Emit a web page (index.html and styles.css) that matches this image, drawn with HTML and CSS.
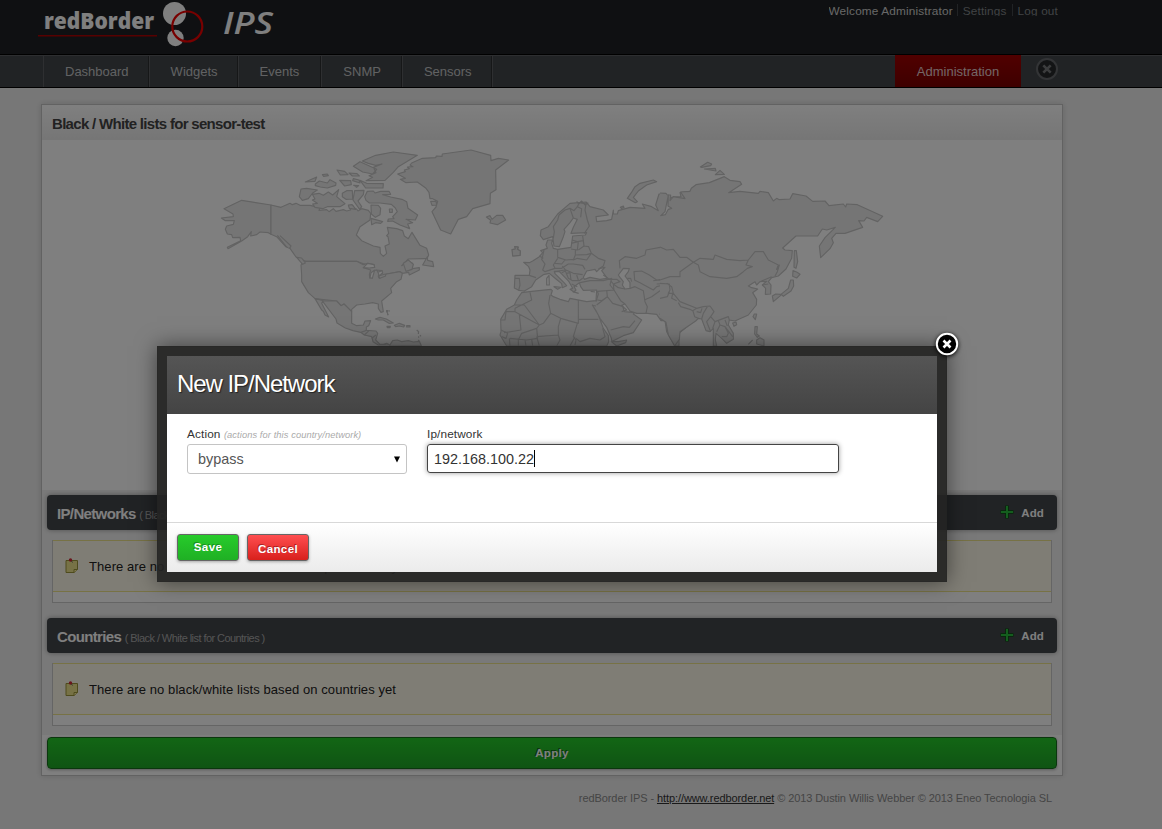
FILE: index.html
```html
<!DOCTYPE html>
<html lang="en">
<head>
<meta charset="utf-8">
<title>redBorder IPS</title>
<link rel="stylesheet" href="styles.css">
</head>
<body>
<div class="page">
  <header class="top">
    <svg class="logo" width="240" height="50" viewBox="36 0 240 50">
      <text class="logo-red" x="44" y="28.5" textLength="110" lengthAdjust="spacingAndGlyphs">redBorder</text>
      <path d="M38 35.7H157" stroke="#b00000" stroke-width="1.4"/>
      <circle cx="174.500" cy="13.500" r="11.500" fill="#fff"/>
      <circle cx="175.500" cy="38" r="8.200" fill="#fff"/>
      <circle cx="187.300" cy="26.500" r="15" fill="none" stroke="#f00000" stroke-width="2.200"/>
      <text class="logo-ips" x="223" y="34" textLength="50" lengthAdjust="spacingAndGlyphs">IPS</text>
    </svg>
    <nav class="user">
      <span class="user-name">Welcome Administrator</span>
      <a>Settings</a>
      <a>Log out</a>
    </nav>
  </header>
  <nav class="menu">
    <a class="tab">Dashboard</a><a class="tab">Widgets</a><a class="tab tab-events">Events</a><a class="tab tab-snmp">SNMP</a><a class="tab">Sensors</a>
    <a class="admin">Administration</a>
    <svg class="menu-close" width="24" height="24" viewBox="0 0 24 24"><circle cx="12" cy="12" r="10" fill="#26282b" stroke="#66696c" stroke-width="2"/><path d="M8.300 8.300l7.400 7.400M15.700 8.300l-7.400 7.400" stroke="#77797b" stroke-width="2.600"/></svg>
  </nav>
  <main class="panel">
    <h1 class="panel-title">Black / White lists for sensor-test</h1>
    <svg class="map" width="1020" height="350" viewBox="42 140 1020 350">
      <g transform="translate(200 140) scale(.33333)">
        <path d="M72 206L125 181L213 195V283L205 278L180 276L170 284L152 288L154 275L143 290L125 303L84 326L82 322L122 302L120 292L98 293L95 284L82 282L76 268L80 258L100 253L103 242L76 242L64 234L100 230L99 222Z"/>
        <path d="M213 195L243 202L270 190L277 194L288 190L300 196L330 196L360 203L357 211L380 209L387 215L400 206L408 214L430 209L440 213L452 210L447 197L458 196L463 205L470 207L474 213L485 206L505 211L512 220L510 240L480 260L469 285L485 302L520 318L540 322L541 340L550 349L560 340L555 318L568 312L564 290L560 287L566 280L562 262L590 266L608 272L613 288L625 296L636 277L660 316L680 325L686 345L681 356L672 356L625 357L605 377L622 366L638 370L637 386L658 383L658 390L628 405L626 397L607 400L600 395L560 402L538 415L533 410L510 415L508 398L490 383L503 376L470 364H317L288 351L270 325L257 320L230 290L213 283Z"/>
        <path d="M308 367L317 364H470L490 374L503 370L522 374L524 382L490 383L512 390L508 405L510 415L520 394L528 390L540 397L535 410L538 415L560 402L600 395L607 400L603 418L590 425L572 445L575 458L545 483L550 515L543 517L535 505V492L518 488L495 492L470 495L455 508L455 515L440 500L432 492L423 497L410 483L345 476L325 458L305 425L305 405L303 375Z"/>
        <path d="M345 476L370 482L410 483L423 497L432 492L440 500L455 515L455 550L470 557L490 555L495 543L512 542L506 557L499 561V571L528 573L533 580L527 600L540 613L550 613L560 610L570 615H535L519 605L515 590L493 585L482 577L459 572L436 564L411 549L408 537L368 484L365 490L386 531L375 525L370 514L365 510Z"/>
        <path d="M483 577L499 571M493 585L506 573M515 595L528 585M240 287L273 318L268 326M290 352L305 354L316 369L308 373ZM232 286L260 321M530 390L546 392L548 400L538 402ZM535 408L556 402L557 408L540 415ZM610 370L625 360L640 373L636 388L618 394ZM682 350L668 375L701 380L698 365L683 361Z"/>
        <path class="water" d="M490 383L503 370L522 374L524 382L508 384ZM513 398L524 390L517 415L510 413ZM534 397L546 392L548 398L538 408Z"/>
        <path d="M526 537L540 532L559 537L580 549L567 550L550 540L535 540ZM583 556L598 550L614 556L611 561L598 558L587 560ZM561 559L571 559L570 563L562 563ZM620 557H630V561H620ZM558 512H563V515H558M566 511L569 514M563 521V526M560 514L565 526M650 570L656 575L655 582M656 589V593M660 585L663 589M654 600L660 605M568 618L578 602L592 600L605 605L625 602L640 606L658 604L664 617Z"/>
        <path d="M298 170L303 147L320 145L352 150L338 159L325 176L307 181ZM316 126L350 111L345 124ZM346 132L358 123L382 129L390 119L408 129L407 136L382 144L361 141L346 137ZM337 163L357 160L370 166L385 156L398 165L416 149L410 170L435 191L420 200L382 200L368 206L345 202L338 192L352 190L337 180L345 177ZM367 104L382 102L385 107L371 109ZM411 90L434 94L444 104L421 105ZM419 121L452 122L454 134L434 138ZM460 79L480 65L530 88L518 102L488 96ZM487 63L527 46L580 36L652 46L595 80L580 97L555 121L498 122L518 112L507 107L528 98L520 82L546 72L527 76L505 70ZM480 121L500 130L550 131L549 144L497 144L489 133ZM427 160L440 152H457L458 177L438 178L427 170ZM464 152L492 151L490 164L474 183L485 200L479 208L459 180ZM447 99L471 101L478 108L457 108ZM460 116L477 120L480 129L458 122ZM461 136L476 137L470 142ZM445 195L456 194L468 208L448 205Z"/>
        <path d="M494 170L502 154L520 153L525 159L542 154L567 154L572 163L548 164L572 171L606 178L620 185L624 205L653 225L646 240L618 238L638 248L623 252L629 266L600 255L578 243L563 244L565 237L582 236L578 230L592 215L586 204L574 193L540 189H508L498 181ZM513 195L535 196L542 205L540 224L526 232L514 222ZM513 235L548 245L542 250L527 248L515 254ZM568 207L577 207V217L569 217Z"/>
      </g>
      <g transform="translate(390 140) scale(.33333)">
        <path d="M23 102L46 95L43 90L58 86L52 81L69 80L60 75L65 69L97 55L137 53L139 48L156 49L157 42L243 30L302 46L303 62L325 55L356 60L317 90L318 149L301 160L300 191L248 206L230 230L205 238L182 282L152 270L126 215L138 201L143 184L128 176L120 176L117 157L108 145L82 126L48 128L31 118L46 115ZM122 184H138L140 195L126 196ZM289 231L300 227L306 238L320 226L338 226L347 240L322 254L300 249L302 241ZM367 329L377 327L375 320L385 321L383 328L391 333L390 346L369 348Z"/>
      </g>
      <g transform="translate(490 190) scale(.33333)">
        <path d="M600 4L570 8L573 20L545 22L533 30L522 12H507L497 45L505 62L485 50L457 42L465 55L420 52L385 62L382 72L370 72V60L365 88L350 92L320 95L318 80L355 75L340 60L300 50L288 36L240 40L203 72L175 110L153 120L151 137L160 149L188 140L192 168L208 170L220 140L225 125L222 118L240 98L250 84L262 88L250 112L243 130L290 128L286 135L248 138L245 160L243 172L203 178L190 175L185 160L187 150L173 150L168 165L172 175L152 182L158 188L148 200L128 213L118 218L101 217L116 230L120 240L118 256H75L73 294L86 301L103 303L125 290L137 270L160 254L178 250L198 267L215 281L217 293L230 287L222 278L195 251L193 244L208 245L225 262L237 275L248 295L240 298L252 306L258 300L252 290L268 278L272 290L280 301L320 300L318 332L290 335L240 325L235 335L210 328L190 320L183 315L187 302L183 298L125 304L95 308L80 330L73 345L50 358L32 388L33 425L30 435L50 468H350L356 455L355 437L340 415L325 375L307 345L318 362L330 385L350 412L364 445L366 455H385L410 450L407 458L380 468L364 455L400 437L430 428L455 390L430 372L433 368L403 365L397 345L405 342L420 363L440 370L472 370L500 373L513 392L525 392L530 425L555 468L567 468V430L600 402"/>
        <path class="water" d="M280 262L290 243L315 238L320 245L330 235L345 232L335 242L352 265L330 268L300 262L283 268ZM385 255L400 235L418 236L415 245L405 258L420 278L420 295L405 297L397 285L400 275L390 262Z"/>
        <path class="line" d="M190 145L193 125L190 110L203 90L207 75L225 60L240 55L252 62L262 50L275 56L272 82M240 55L250 84M288 42L285 60L292 90L298 108L283 130M262 50L268 38L290 42M260 34L266 42L275 33L285 45L295 38M246 150L262 155L280 152L278 138M243 160L265 155L262 180L243 177M280 152L282 168L265 180M282 168L296 170L304 190L290 194L256 195M256 179L256 195L250 210L262 205L290 210L304 190L325 205L345 212L340 228L325 238M203 178V202L228 210L252 208M162 180L158 198L155 208L165 222L158 240L165 245L195 235L190 225L203 205M148 198L160 205M75 265L88 265L90 285L86 301M118 256L138 263M195 220L215 222L225 210M195 235L215 235L235 222L250 222L278 226L285 238M217 228L228 242L215 248M228 240L250 250L278 254M195 245L225 240L235 265L248 272L268 272L278 265M230 250L240 248L243 270M260 255L265 270M170 265L177 256L178 285H170ZM192 290L213 292L203 298ZM245 282L262 290M248 305L266 310M302 304L315 306M270 278L300 272L340 272L365 265L360 285L372 300L322 304L325 312L318 335M340 255L358 268L380 268L390 275L370 282L362 272M372 300L370 282L385 293L405 297M350 300L352 320L335 332L322 330M350 302L372 300L392 332L405 342M320 345L352 320L368 340L400 350M420 295L435 290L460 302L465 335L472 350L468 370M433 270L450 278L490 300L500 290L520 285L530 290L510 302L485 320L463 330M390 235L388 212L405 200L440 205L465 195L468 180L510 172L548 182L575 198L600 208M434 270L432 245L455 243L478 255L500 270L530 265L575 260L578 240L600 230M490 272L510 270L520 280L540 275L565 275M500 282L545 280L540 290M540 290L550 310L530 335L515 350L510 375M520 300L530 305M120 307L125 330L75 355M75 345L103 345L148 405M75 355L75 365H48L45 390H33M88 373L93 420L42 428M75 365L148 405L140 415L95 430L85 450M180 315L176 340L182 370L160 400L148 405M182 370L212 385L205 410L205 435L140 440M212 385L265 400V330M265 388H325M262 400L250 440L258 450L255 465M140 415L143 445L110 450L60 445M205 435L210 450L200 468M258 445L270 455L300 445L330 450L345 440L338 415M33 420L53 430L48 445L35 440M58 445L60 468M85 450V468M105 450L108 468M125 448L128 468M140 440L148 468M255 440L240 468M362 420L400 410L418 412L435 392M393 345L410 360L395 365M412 265L422 265L425 275M307 346L318 348"/>
        <path d="M412 25L426 5L435 -10L450 -20L490 -30L500 -25L470 -15L445 3L430 22L442 35L436 38ZM391 52L400 48L402 53L394 55ZM66 179L76 177L74 170L84 171L82 178L91 183L90 196L68 198Z"/>
      </g>
      <g transform="translate(660 150) scale(.33333)">
        <path class="line land" d="M0 129L18 130L22 135L32 135L30 152L40 140L75 146L62 126L90 124L94 115L108 104L148 98L193 80L210 91L240 95L245 103L206 128L240 124L295 130L300 124L325 128L340 153L350 145L358 149L390 147L398 131L438 138L458 154L495 153L507 167L550 162L557 171L560 162L592 164L668 199L653 215L620 202L612 213L596 212L608 232L555 250L528 250L515 265L520 278L510 296L482 323L478 288L495 263L526 232L500 240L487 237L473 258H408L368 294L375 300L397 302L395 325L378 357L355 378L335 383L325 395L333 405L332 432L316 433L317 415L307 405L320 394L300 395L290 405L285 395L265 408L275 413L293 417L278 428L290 448L289 465L265 495L238 507L225 513L208 510L205 525L220 550V568L200 580L185 565L168 550L166 570L170 588H160V535L150 545L138 542L125 507L115 505L107 513L60 545L58 568L44 588L25 555L18 517L0 505"/>
        <path class="line" d="M0 291L20 300L40 298L60 322L80 322L100 337L120 325L160 328L165 315L200 328L240 332L265 330L258 345L277 350L262 355L250 365L230 380L200 385L150 380L120 365L115 345L100 337M100 337L60 365V380H30L0 390M265 330L285 305L310 305L325 330L355 345L350 358L358 345L352 365L345 378M300 395L335 380M307 405L325 402M20 400L35 410L40 430L60 455L110 475L130 470L150 468L162 485L152 500L165 515L205 500L208 510M0 400L28 402L30 420L25 430L38 430L35 445L50 452M55 458L62 470L90 478L98 482L110 475M98 480L104 500L115 505M110 485L122 488L126 475M0 445L22 440L28 425M125 507L130 490L142 470M152 500L140 515L152 545M165 515L158 535M175 512L180 525L195 530L205 550L200 560L185 560M180 525L170 545M195 530L218 560M195 510L202 528"/>
        <path d="M121 51L143 37L155 42L152 47L125 52ZM133 57L166 55L168 63ZM166 74L180 61L193 73ZM403 302H409L413 335L408 355L402 352ZM399 362L410 366L420 373L410 384L398 379ZM392 390L400 390L401 408L393 423L370 439L365 434L340 455L337 438L347 432L363 433L385 415ZM283 492H290L286 509L279 500ZM218 519L228 516L230 524L222 529ZM285 530H292L290 552L298 558L292 562L284 552ZM265 583L278 570M290 570L300 563L312 570V588L290 582Z"/>
        <path class="water" d="M2 197L15 185L25 135L24 168L35 175L25 178L16 194Z"/>
      </g>
    </svg>
    <section class="lists">
      <div class="bar"><h2>IP/Networks <small>( Black / White list for IP/Networks )</small></h2>
        <a class="add"><svg width="14" height="14" viewBox="0 0 14 14"><path d="M7 .5v13M.5 7h13" stroke="#0a4f12" stroke-width="3.600"/><path d="M7 1v12M1 7h12" stroke="#28bd3d" stroke-width="2"/></svg>Add</a></div>
      <div class="box"><p class="note"><svg width="14" height="16" viewBox="0 0 14 16"><path d="M1 2.500h11.500v9l-3.500 3H1z" fill="#efe58d" stroke="#9d963a"/><path d="M12.500 11.500H9v3" fill="#fff3a0" stroke="#9d963a"/><circle cx="5.500" cy="2" r="1.700" fill="#d32c38"/><path d="M6.500 3l1 1.500" stroke="#665"/></svg>There are no black/white lists based on ip/networks yet</p></div>
      <div class="bar"><h2>Countries <small>( Black / White list for Countries )</small></h2>
        <a class="add"><svg width="14" height="14" viewBox="0 0 14 14"><path d="M7 .5v13M.5 7h13" stroke="#0a4f12" stroke-width="3.600"/><path d="M7 1v12M1 7h12" stroke="#28bd3d" stroke-width="2"/></svg>Add</a></div>
      <div class="box"><p class="note"><svg width="14" height="16" viewBox="0 0 14 16"><path d="M1 2.500h11.500v9l-3.500 3H1z" fill="#efe58d" stroke="#9d963a"/><path d="M12.500 11.500H9v3" fill="#fff3a0" stroke="#9d963a"/><circle cx="5.500" cy="2" r="1.700" fill="#d32c38"/><path d="M6.500 3l1 1.500" stroke="#665"/></svg>There are no black/white lists based on countries yet</p></div>
    </section>
    <button class="apply">Apply</button>
  </main>
  <footer class="foot">redBorder IPS - <a>http://www.redborder.net</a> © 2013 Dustin Willis Webber © 2013 Eneo Tecnologia SL</footer>
</div>
<div class="overlay"></div>
<div class="modal">
  <h2 class="modal-title">New IP/Network</h2>
  <div class="fields">
    <div class="field-action">
      <label>Action <em>(actions for this country/network)</em></label>
      <div class="select"><span>bypass</span><svg width="6" height="7" viewBox="0 0 6 7"><path d="M0 0.500h6L3 6.500z" fill="#000"/></svg></div>
    </div>
    <div class="field-ip">
      <label>Ip/network</label>
      <div class="input">192.168.100.22<i class="caret"></i></div>
    </div>
  </div>
  <div class="actions"><button class="btn save">Save</button><button class="btn cancel">Cancel</button></div>
  <svg class="modal-close" width="30" height="30" viewBox="0 0 30 30"><circle cx="15" cy="15" r="10.200" fill="#000" stroke="#fff" stroke-width="2"/><path d="M11.500 11.500l7 7M18.500 11.500l-7 7" stroke="#fff" stroke-width="2.600"/></svg>
</div>
</body>
</html>
```
FILE: styles.css
```css
* { box-sizing: border-box; }
html, body { height: 100%; }
body { margin: 0; overflow: hidden; font-family: "Liberation Sans", Arial, sans-serif; font-size: 13px; color: #333; background: #efefef; }
h1, h2, p { margin: 0; }
button { font-family: inherit; padding: 0; }
.page { height: 829px; }
.top { height: 55px; padding: 0 104px 0 36px; display: flex; justify-content: space-between; background: #1e2124; border-bottom: 1px solid #000; }
.logo { display: block; }
.logo-red { font: 800 22px "Open Sans", sans-serif; fill: #fff; }
.logo-ips { font: italic 600 30px "Open Sans", sans-serif; fill: #fff; }
.user { display: flex; height: 16px; overflow: hidden; font-size: 11.800px; line-height: 23px; letter-spacing: .15px; color: #82868a; }
.user-name { color: #d0d0d0; padding-right: 4px; }
.user a { border-left: 1px solid #43474a; margin-top: 4px; line-height: 15px; padding: 0 5px; }
.user a:last-child { padding-right: 0; }
.menu { height: 33px; padding-left: 43px; display: flex; background: #43474b; border-top: 1px solid #5a5d60; border-bottom: 1px solid #000; line-height: 32px; color: #c3c5c6; position: relative; }
.tab { padding: 0 20px 0 21px; border-right: 1px solid #5c5f62; box-shadow: inset -1px 0 #2c2f31; }
.tab:first-child { border-left: 1px solid #5c5f62; }
.tab-events { padding-right: 22px; }
.tab-snmp { padding-right: 21px; }
.admin { width: 126px; margin: 0 14px 0 auto; text-align: center; background: linear-gradient(#a10000, #7c0000); color: #e6cccc; margin-top: -1px; line-height: 34px; }
.menu-close { margin: 1px 103px 0 0; }
.panel { width: 1022px; height: 672px; margin: 16px 0 0 41px; border: 1px solid #c4c4c4; background: #fff; box-shadow: 0 0 6px rgba(0,0,0,.15); }
.panel-title { height: 35px; padding-left: 10px; line-height: 38px; font-size: 15px; letter-spacing: -.69px; color: #444; background: linear-gradient(#fff, #ececec); }
.map { display: block; fill: #ebebeb; }
.map path { stroke: #c6c6c6; stroke-width: 3.500; stroke-linejoin: round; }
.map .line { fill: none; }
.map .land { fill: #ebebeb; }
.map .water { fill: #fff; }
.lists { height: 245px; padding: 5px; background: #f3f3f3; }
.bar { height: 35px; padding: 0 13px 0 10px; display: flex; justify-content: space-between; align-items: center; border-radius: 4px; background: #43464a; box-shadow: 0 0 5px rgba(0,0,0,.35); color: #fff; }
.bar h2 { font-size: 15px; letter-spacing: -.65px; color: #fff; padding-top: 1px; }
.bar small { font-size: 11px; font-weight: normal; letter-spacing: -.56px; color: #aaa; }
.add { display: flex; gap: 7px; align-items: center; font-size: 11.500px; font-weight: bold; letter-spacing: .1px; }
.add svg { margin-bottom: 2px; }
.box { height: 63px; margin: 10px 5px 15px; border: 1px solid #cacaca; border-top: 0; background: #fff; }
.note { height: 52px; padding: 0 0 0 12px; display: flex; align-items: center; gap: 10px; border: solid #eee58b; border-width: 1px 0; background: #fffbeb; color: #222; letter-spacing: .08px; }
.note svg { margin-bottom: 1px; }
.apply { display: block; width: 1010px; height: 32px; margin: 2px 5px 0; border: 1px solid #176f1c; border-radius: 4px; background: linear-gradient(#25cc2a, #1fa927); color: #fff; font-size: 11.500px; font-weight: bold; letter-spacing: .3px; box-shadow: 0 1px 3px rgba(0,0,0,.3); text-shadow: -1px -1px #18661a; }
.foot { padding: 16px 110px 0 0; text-align: right; font-size: 11px; line-height: 13px; letter-spacing: -.085px; color: #8a8a8a; }
.foot a { color: #333; text-decoration: underline; }
.overlay { position: absolute; inset: 0; background: rgba(0,0,0,.5); }
.modal { position: absolute; left: 157px; top: 346px; width: 790px; height: 236px; border: 10px solid rgba(36,36,35,.92); background: #fff padding-box; box-shadow: 0 0 20px rgba(0,0,0,.5); }
.modal-title { height: 58px; padding-left: 10px; line-height: 56px; font-size: 24px; font-weight: normal; letter-spacing: -1.050px; color: #fff; text-shadow: 1px 1px 1px #222; background: linear-gradient(#555, #444); }
.fields { height: 108px; padding: 13px 20px 0; display: flex; gap: 20px; }
.field-action { width: 220px; }
.field-ip { width: 412px; }
label { display: block; height: 17px; line-height: 15px; font-size: 11.800px; letter-spacing: .12px; color: #333; white-space: nowrap; }
label em { font-size: 9.300px; letter-spacing: .09px; color: #aaa; }
.select, .input { display: flex; align-items: center; border-radius: 3px; font-size: 14.400px; }
.select { height: 30px; padding: 0 6px 0 10px; justify-content: space-between; border: 1px solid #c4c4c4; color: #555; }
.input { height: 29px; padding-left: 6px; border: 1px solid #444; color: #333; box-shadow: 0 0 5px rgba(0,0,0,.4); }
.caret { width: 1px; height: 17px; background: #000; }
.actions { height: 50px; padding: 11px 10px; display: flex; gap: 8px; border-top: 1px solid #d8d8d8; background: linear-gradient(#fff, #ebebeb); }
.btn { width: 62px; height: 27px; border: 1px solid #666; border-radius: 3px; color: #fff; font-size: 11.500px; font-weight: bold; letter-spacing: .4px; box-shadow: 0 1px 3px rgba(0,0,0,.3); }
.save { background: linear-gradient(#27cb2b, #1fb024); text-shadow: -1px -1px #198d1d; padding-bottom: 1px; }
.cancel { background: linear-gradient(#ff4e50, #d8201c); text-shadow: -1px -1px #a92222; padding-top: 3px; }
.modal-close { position: absolute; left: 765px; top: -27px; filter: drop-shadow(0 1px 2px #000); }
```
